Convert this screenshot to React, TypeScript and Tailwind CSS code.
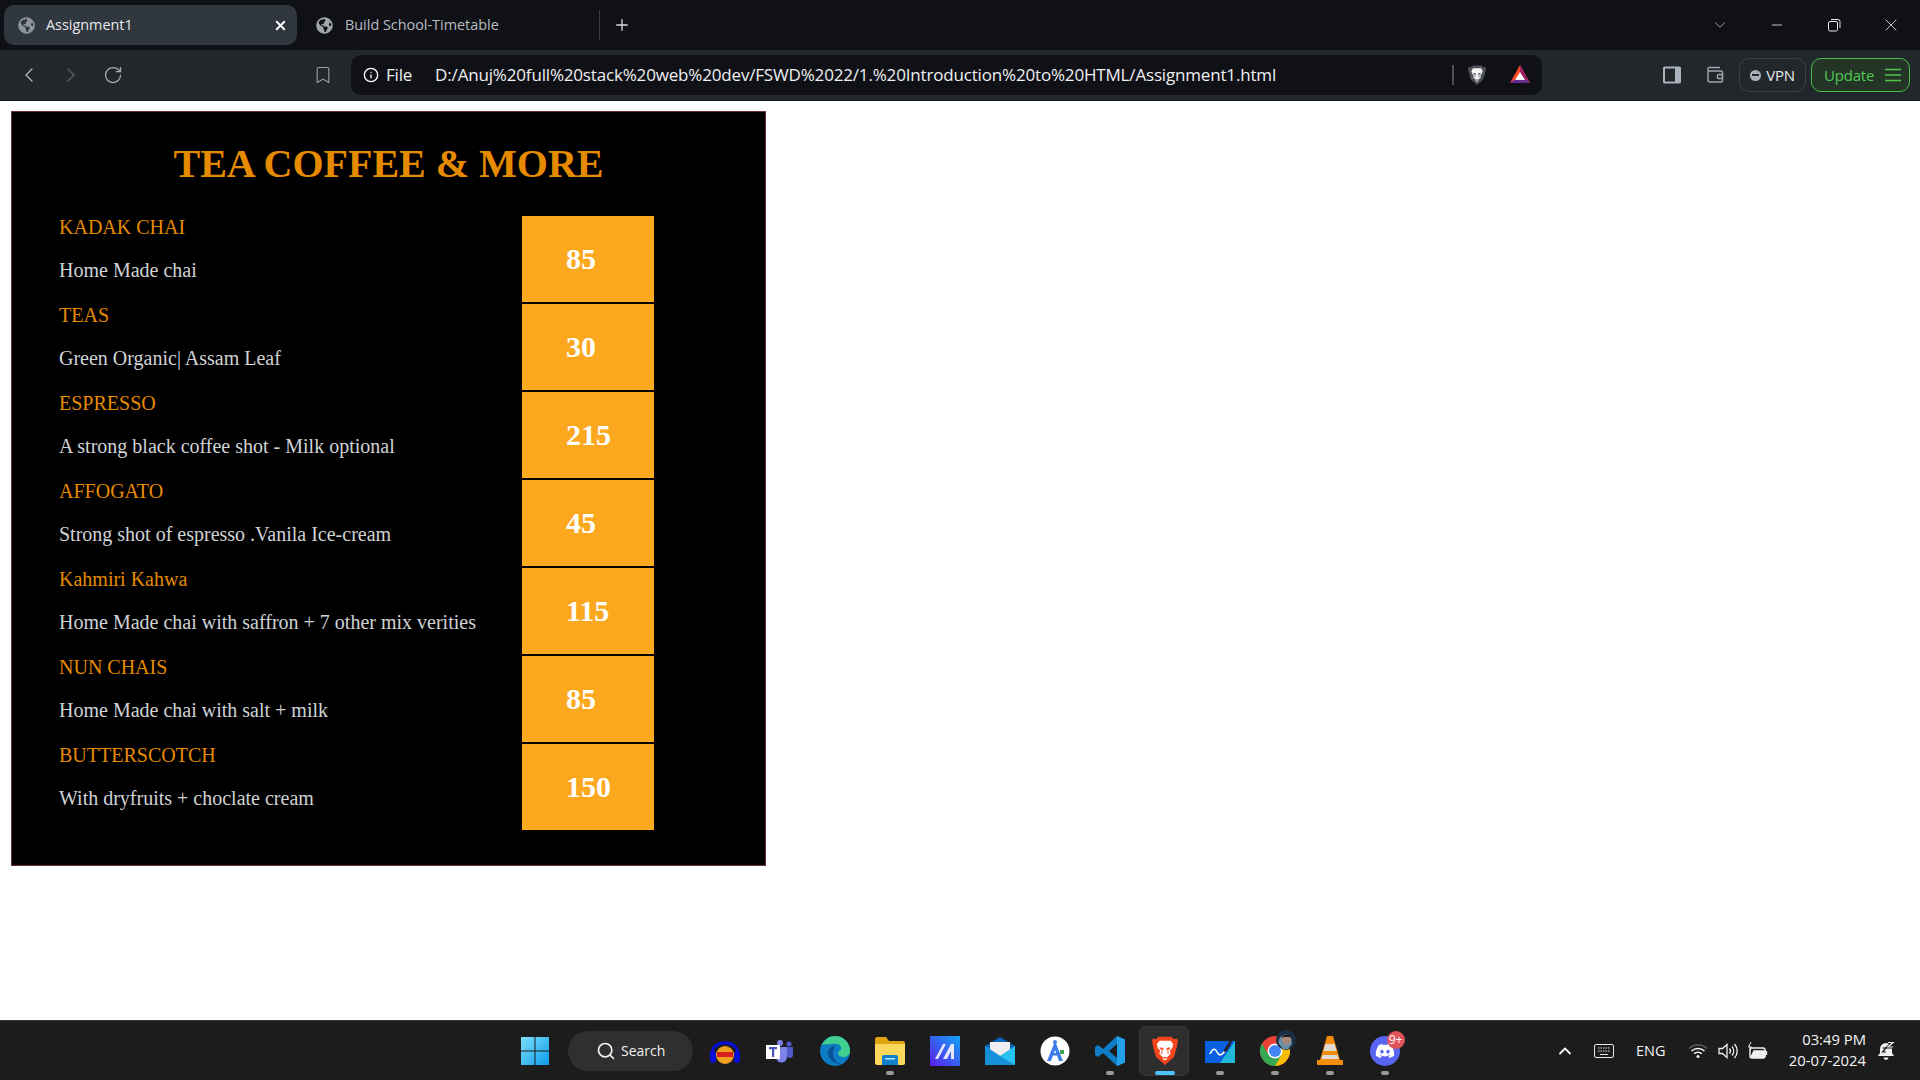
import React from "react";
import { ChevronLeft, ChevronRight, RotateCw, Bookmark, Info, Plus, X, ChevronDown, Minus, Search, ChevronUp } from "lucide-react";
import { FaGlobeAmericas, FaDiscord } from "react-icons/fa";

const items = [
  ["KADAK CHAI", "Home Made chai", "85"],
  ["TEAS", "Green Organic| Assam Leaf", "30"],
  ["ESPRESSO", "A strong black coffee shot - Milk optional", "215"],
  ["AFFOGATO", "Strong shot of espresso .Vanila Ice-cream", "45"],
  ["Kahmiri Kahwa", "Home Made chai with saffron + 7 other mix verities", "115"],
  ["NUN CHAIS", "Home Made chai with salt + milk", "85"],
  ["BUTTERSCOTCH", "With dryfruits + choclate cream", "150"],
];

const ui = "font-['Open_Sans','Noto_Sans',sans-serif]";

function Slot({ children, mark, active }: { children: React.ReactNode; mark?: boolean; active?: boolean }) {
  return (
    <div className="relative w-[55px] h-[50px] flex items-center justify-center">
      {active && <span className="absolute inset-y-0 left-[2px] w-[50px] rounded-md bg-[#2e2e2e] border border-[#363636]" />}
      <div className="relative flex">{children}</div>
      {mark && <span className="absolute bottom-[1px] left-1/2 -translate-x-1/2 w-[8px] h-[4px] rounded-full bg-[#9a9a9a]" />}
      {active && <span className="absolute bottom-[1px] left-1/2 -translate-x-1/2 w-[20px] h-[4px] rounded-full bg-[#4cc2ff]" />}
    </div>
  );
}

function Lion({ size, body, face }: { size: number; body: string; face: string }) {
  return (
    <svg width={size} height={size * 1.15} viewBox="0 0 32 37">
      <path d="M8 1h16l3 3 4-1 1 3-1 6-1 4-3 10-8 7-3 3-3-3-8-7-3-10-1-4-1-6 1-3 4 1z" fill={body} />
      <path d="M9 6h14l3 4-1 5-3 3 1 4-4 4-1 3-2 1-2-1-1-3-4-4 1-4-3-3-1-5z" fill={face} />
      <path d="M9 14l5 1 0 2-3 0zM23 14l-5 1 0 2 3 0z" fill={body} />
      <path d="M14 17l-1 6-3-1 2-5zM18 17l1 6 3-1-2-5z" fill={body} fillOpacity="0.45" />
      <path d="M13 26h6l-3 2.500z" fill={body} />
    </svg>
  );
}

export default function App() {
  return (
    <div className={`h-screen flex flex-col bg-white overflow-hidden ${ui}`}>
      {/* tab strip */}
      <div className="h-[50px] bg-[#0f1116] flex items-center pl-[4px] pr-[19px] shrink-0">
        <div className="w-[293px] h-[40px] rounded-[10px] bg-[#30373e] flex items-center pl-[14px] pr-[9px] text-[#e6e8ea] text-[14.4px]">
          <FaGlobeAmericas size={17} className="text-[#8f959c]" />
          <span className="ml-[11px] flex-1">Assignment1</span>
          <X size={15} strokeWidth={3} className="text-white" />
        </div>
        <div className="w-[302px] h-[40px] flex items-center pl-[19px] text-[#b9bdc2] text-[14.4px]">
          <FaGlobeAmericas size={17} className="text-[#a0a5ab]" />
          <span className="ml-[12px]">Build School-Timetable</span>
        </div>
        <div className="w-px h-[30px] bg-[#3a3e44]" />
        <Plus size={18} strokeWidth={1.75} className="ml-[13px] text-[#d8dade]" />
        <ChevronDown size={18} strokeWidth={1} className="ml-auto text-[#c8cace]" />
        <Minus size={16} strokeWidth={1.25} className="ml-[40px] text-[#e6e6e6]" />
        <svg width="14" height="14" viewBox="0 0 14 14" fill="none" stroke="#e6e6e6" className="ml-[42px]">
          <rect x="1.5" y="3.5" width="9" height="9.5" rx="1.5" />
          <path d="M4 1.5h7a2 2 0 0 1 2 2V10" />
        </svg>
        <X size={20} strokeWidth={1} className="ml-[40px] text-[#eeeeee]" />
      </div>
      {/* toolbar */}
      <div className="h-[51px] bg-[#22272c] border-b border-[#15181b] flex items-center shrink-0 text-[#c4c8cc]">
        <ChevronLeft size={24} strokeWidth={1.25} className="ml-[17px] text-[#b5bac0]" />
        <ChevronRight size={24} strokeWidth={1.25} className="ml-[18px] text-[#5c6268]" />
        <RotateCw size={20} strokeWidth={1.5} className="ml-[20px] text-[#a9aeb4]" />
        <Bookmark size={20} strokeWidth={1.25} className="ml-[190px] text-[#a0a5ab]" />
        <div className="ml-[18px] w-[1191px] h-[40px] rounded-[10px] bg-[#0f1116] flex items-center pl-[12px] text-[#eef0f2] text-[17px]">
          <Info size={16} strokeWidth={2} className="text-white" />
          <span className="ml-[7px] tracking-[-0.2px]">File</span>
          <span className="ml-[23px] tracking-[-0.17px]">D:/Anuj%20full%20stack%20web%20dev/FSWD%2022/1.%20Introduction%20to%20HTML/Assignment1.html</span>
          <div className="ml-auto w-[2px] h-[20px] bg-[#4b4f55]" />
          <div className="ml-[14px] flex"><Lion size={18} body="#4c4e58" face="#f4f4f4" /></div>
          <svg width="24" height="24" viewBox="0 0 24 24" className="ml-[22px] mr-[10px]">
            <path d="M12 2l10 18H2z" fill="#ff4724" />
            <path d="M12 2l10 18-5 0-5-9z" fill="#9e1f63" />
            <path d="M2 20l5-4h10l5 4z" fill="#662d91" />
            <path d="M12 9l5 8H7z" fill="#ffffff" />
          </svg>
        </div>
        <svg width="20" height="20" viewBox="0 0 20 20" className="ml-[120px]">
          <rect x="1" y="1.5" width="18" height="17" rx="1.5" fill="#aab2bd" />
          <rect x="3" y="3.5" width="10" height="13" fill="#22272c" />
        </svg>
        <svg width="20" height="20" viewBox="0 0 20 20" fill="none" stroke="#a0a6ae" strokeWidth="1.4" className="ml-[23px]">
          <path d="M3 5.5V15a2 2 0 0 0 2 2h11a1.5 1.5 0 0 0 1.5-1.5v-8A1.5 1.5 0 0 0 16 6H4.5a1.5 1.5 0 0 1 0-3.5H15" />
          <rect x="12.5" y="9.5" width="5" height="4" rx="1" />
        </svg>
        <div className="ml-[14px] w-[67px] h-[34px] rounded-[10px] border border-[#3a4046] flex items-center justify-center text-[#e8eaec] text-[15px] tracking-[-0.2px]">
          <span className="w-[11px] h-[11px] rounded-full bg-[#a9b0ba] flex items-center justify-center mr-[5px]"><span className="w-[7px] h-[2px] bg-[#22272c]" /></span>
          VPN
        </div>
        <div className="ml-[5px] w-[99px] h-[34px] rounded-[10px] border border-[#46c046] bg-[#243427] flex items-center pl-[12px] text-[#4fc94f] text-[15px] tracking-[-0.2px]">
          Update
          <svg width="18" height="14" viewBox="0 0 18 14" stroke="#4fc94f" strokeWidth="1.5" className="ml-[10px]">
            <path d="M1 1.5h16M1 7h16M1 12.5h16" />
          </svg>
        </div>
      </div>
      {/* page */}
      <div className="flex-1 pt-[10px] pl-[11px] min-h-0">
        <div className="w-[755px] h-[755px] bg-black border border-[#6b2f2f] font-['Liberation_Serif',serif] text-[20px]">
          <h1 className="h-[104px] pt-[29px] text-center text-[40px] leading-[46px] font-bold text-[#e68a00]">TEA COFFEE &amp; MORE</h1>
          <div className="flex flex-col gap-[2px] pl-[47px]">
            {items.map(([name, desc, price]) => (
              <div key={name} className="h-[86px] flex">
                <div className="w-[463px] leading-[23px]">
                  <p className="text-[#e68a00]">{name}</p>
                  <p className="mt-[20px] text-[#cfd3d6]">{desc}</p>
                </div>
                <div className="w-[132px] bg-[#fca81e] flex items-center pl-[44px] pb-[2px] text-white font-bold text-[30px]">{price}</div>
              </div>
            ))}
          </div>
        </div>
      </div>
      {/* taskbar */}
      <div className="h-[60px] bg-[#1c1c1c] border-t border-[#333333] flex items-center pl-[507px] shrink-0 text-white">
        <Slot>
          <svg width="30" height="30" viewBox="0 0 30 30">
            <defs>
              <linearGradient id="w" x1="0" y1="0" x2="1" y2="1"><stop offset="0" stopColor="#7fe0fb" /><stop offset="1" stopColor="#0a9aeb" /></linearGradient>
            </defs>
            <path d="M1 1h13.5v13.5H1zM15.5 1H29v13.5H15.5zM1 15.500h13.5V29H1zM15.5 15.500H29V29H15.5z" fill="url(#w)" />
          </svg>
        </Slot>
        <div className="ml-[6px] w-[125px] h-[40px] rounded-full bg-[#2f2f2f] flex items-center pl-[28px] text-[14px] text-[#f0f0f0]">
          <Search size={20} strokeWidth={2} />
          <span className="ml-[5px]">Search</span>
        </div>
        <div className="ml-[4px] flex items-center">
          <Slot>
            <svg width="32" height="28" viewBox="0 0 32 28">
              <path d="M3 17C3 2 29 2 29 17" fill="none" stroke="#0a10d8" strokeWidth="3" />
              <ellipse cx="16" cy="18" rx="9" ry="9" fill="#f0a020" />
              <rect x="8" y="15" width="16" height="5" fill="#d92020" />
              <rect x="1" y="14" width="6" height="12" rx="3" fill="#0a10d8" />
              <rect x="25" y="14" width="6" height="12" rx="3" fill="#0a10d8" />
            </svg>
          </Slot>
          <Slot>
            <svg width="28" height="26" viewBox="0 0 28 26">
              <circle cx="14" cy="5" r="3" fill="#7b83eb" /><circle cx="23" cy="6" r="2.5" fill="#5059c9" />
              <path d="M10 9h11v10a5 5 0 0 1-11 0z" fill="#7b83eb" />
              <path d="M21 9h6v8a3 3 0 0 1-6 0z" fill="#5059c9" />
              <rect x="0" y="7" width="14" height="14" fill="#ffffff" />
              <rect x="3" y="9" width="8" height="2.2" fill="#4b53bc" /><rect x="6" y="9" width="2.2" height="10" fill="#4b53bc" />
            </svg>
          </Slot>
          <Slot>
            <svg width="30" height="30" viewBox="0 0 30 30">
              <circle cx="15" cy="15" r="15" fill="#0c7cc4" />
              <path d="M1 11C4 3 10 0 15 0c8 0 15 6 15 15 0 4-3 6-7 6-3 0-5-2-5-4 1-3 4-2 3-6-1-3-5-4-8-3C8 9 2 7 1 11z" fill="#3fcf8e" />
              <path d="M15 10c-4 0-7 3-7 7 0 6 6 11 13 11-5-1-8-6-8-10 0-3 1-6 2-8z" fill="#0b4f94" />
            </svg>
          </Slot>
          <Slot mark>
            <svg width="30" height="28" viewBox="0 0 30 28">
              <path d="M0 2a2 2 0 0 1 2-2h9l3 4h14a2 2 0 0 1 2 2v4H0z" fill="#e0a40f" />
              <path d="M0 7h30v19a2 2 0 0 1-2 2H2a2 2 0 0 1-2-2z" fill="#fbd75b" />
              <path d="M7 20a2 2 0 0 1 2-2h12a2 2 0 0 1 2 2v8H7z" fill="#0f80cc" />
              <rect x="10" y="21" width="10" height="1.5" fill="#bfe6ff" />
            </svg>
          </Slot>
          <Slot>
            <svg width="30" height="30" viewBox="0 0 30 30">
              <defs><linearGradient id="m" x1="0" y1="1" x2="1" y2="0"><stop offset="0" stopColor="#5b1cf0" /><stop offset="1" stopColor="#13a4f2" /></linearGradient></defs>
              <rect width="30" height="30" fill="url(#m)" />
              <path d="M5 23L13 8h3L8 23zM13 23l8-15h3v15h-3v-8l-4 8z" fill="#e6e6ff" />
            </svg>
          </Slot>
          <Slot>
            <svg width="30" height="28" viewBox="0 0 30 28">
              <path d="M0 9L15 0l15 9v4H0z" fill="#0a64b8" />
              <path d="M5 5h20v9l-10 5-10-5z" fill="#eeeeee" />
              <path d="M0 9l15 10 15-10v19H0z" fill="#28c2f1" />
              <path d="M0 28V9l15 10 15 9z" fill="#1690d8" />
            </svg>
          </Slot>
          <Slot>
            <svg width="30" height="30" viewBox="0 0 30 30">
              <circle cx="15" cy="15" r="14.5" fill="#ffffff" />
              <path d="M15 5l-8 20h4l4-11 4 11h4z" fill="#3f7de8" />
              <path d="M10 17h10v2.5H10z" fill="#3f7de8" />
              <circle cx="15" cy="6" r="2" fill="#3f7de8" />
              <path d="M20 14h4v4h-4z" fill="#34a853" />
            </svg>
          </Slot>
          <Slot mark>
            <svg width="30" height="30" viewBox="0 0 30 30">
              <path d="M22 0l8 3.5v23L22 30 8 17l-5 4-3-2V11l3-2 5 4z" fill="#0f7ec6" />
              <path d="M22 0l8 3.5v23L22 30z" fill="#22a1ea" />
              <path d="M22 8v14l-8-7z" fill="#1c1c1c" />
            </svg>
          </Slot>
          <Slot active>
            <Lion size={26} body="#f4451c" face="#ffffff" />
          </Slot>
          <Slot mark>
            <svg width="30" height="30" viewBox="0 0 30 30">
              <path d="M0 5h30v22H0z" fill="#0a5fe0" />
              <path d="M15 27h15V5z" fill="#23b7d8" />
              <path d="M5 18c3-6 5-6 7-2s4 4 8-1" fill="none" stroke="#ffffff" strokeWidth="1.6" />
              <path d="M19 14l8-13 2 1-7 13-3 1z" fill="#222222" />
            </svg>
          </Slot>
          <Slot mark>
            <div className="relative">
              <svg width="30" height="30" viewBox="0 0 30 30">
                <circle cx="15" cy="15" r="15" fill="#ea4335" />
                <path d="M15 30a15 15 0 0 0 13-22.500L15 8z" fill="#fbbc05" />
                <path d="M2 7.500A15 15 0 0 0 15 30l7-12H8z" fill="#34a853" />
                <circle cx="15" cy="15" r="7.500" fill="#ffffff" />
                <circle cx="15" cy="15" r="6" fill="#4285f4" />
              </svg>
              <svg width="20" height="20" viewBox="0 0 20 20" className="absolute -top-[6px] -right-[6px]">
                <circle cx="10" cy="10" r="10" fill="#1b2f44" />
                <path d="M3 14a7 7 0 0 1 3-8l4-2 5 3 1 7-4 5H7z" fill="#6a8fa8" />
                <circle cx="10.500" cy="10" r="4.500" fill="#a8897a" />
                <path d="M6 8c0-4 8-5 9 0l-2-1H8z" fill="#1a1a22" />
              </svg>
            </div>
          </Slot>
          <Slot mark>
            <svg width="26" height="30" viewBox="0 0 26 30">
              <path d="M10 0h6l7 24h3v5H0v-5h3z" fill="#f28c0a" />
              <path d="M8.500 8h9l2 7h-13zM5.500 19h15l1 4h-17z" fill="#e0dbd3" />
            </svg>
          </Slot>
          <Slot mark>
            <div className="relative">
              <div className="w-[30px] h-[30px] rounded-full bg-[#5865f2] flex items-center justify-center">
                <FaDiscord size={20} className="text-white" />
              </div>
              <span className="absolute -top-[5px] -right-[5px] w-[18px] h-[18px] rounded-full bg-[#e0535a] flex items-center justify-center text-[12px] leading-none">9+</span>
            </div>
          </Slot>
        </div>
        {/* tray */}
        <div className="ml-auto flex items-center text-[#f2f2f2]">
          <ChevronUp size={20} strokeWidth={2.25} />
          <svg width="20" height="14" viewBox="0 0 20 14" fill="none" stroke="#e8e8e8" className="ml-[19px]">
            <rect x=".5" y=".5" width="19" height="13" rx="1.5" />
            <path d="M4 4h12M4 7h12" strokeDasharray="1.500 1" /><path d="M6 10.500h8" />
          </svg>
          <span className="ml-[22px] w-[32px] text-[14.5px]">ENG</span>
          <svg width="20" height="16" viewBox="0 0 20 16" fill="none" strokeWidth="1.600" className="ml-[20px]">
            <path d="M1 5.500a13 13 0 0 1 18 0" stroke="#555555" />
            <path d="M3.500 8a9.500 9.500 0 0 1 13 0M6.200 10.700a5.500 5.500 0 0 1 7.600 0" stroke="#f4f4f4" />
            <circle cx="10" cy="13.500" r="1.500" fill="#f4f4f4" />
          </svg>
          <svg width="20" height="18" viewBox="0 0 20 18" fill="none" stroke="#f0f0f0" strokeWidth="1.300" className="ml-[10px]">
            <path d="M1 6.500h3.500L9 2.500v13l-4.500-4H1z" />
            <path d="M11.500 6.500a4 4 0 0 1 0 5M14 4.500a7 7 0 0 1 0 9M16.500 2a10.500 10.500 0 0 1 0 14" />
          </svg>
          <svg width="21" height="18" viewBox="0 0 21 18" fill="none" stroke="#f0f0f0" strokeWidth="1.400" className="ml-[9px]">
            <path d="M3 6h13a2 2 0 0 1 2 2v6a2 2 0 0 1-2 2H5a2 2 0 0 1-2-2z" />
            <path d="M4 15l3-6h11v5a1.500 1.500 0 0 1-1.500 1.500z" fill="#f0f0f0" />
            <path d="M19.500 9v4" /><path d="M4 0L1.500 5h3L3 9" strokeWidth="1" />
          </svg>
          <div className="ml-[18px] w-[80px] pb-[2px] text-right text-[14.8px] leading-[21px] text-[#f4f4f4] whitespace-nowrap">
            <div>03:49 PM</div>
            <div>20-07-2024</div>
          </div>
          <svg width="18" height="20" viewBox="0 0 18 20" className="ml-[11px] mr-[25px]">
            <path d="M9 2a6 6 0 0 1 6 6v4l2 3H1l2-3V8a6 6 0 0 1 6-6z" fill="#f0f0f0" />
            <path d="M6.500 16.500a2.500 2.500 0 0 0 5 0z" fill="#f0f0f0" />
            <path d="M5.500 7h3.500l-3.500 4H9" fill="none" stroke="#1c1c1c" strokeWidth="1.200" />
            <path d="M11 1.500h5l-5 4.500h5" fill="none" stroke="#1c1c1c" strokeWidth="3" />
            <path d="M11 1.500h5l-5 4.500h5" fill="none" stroke="#f0f0f0" strokeWidth="1.200" />
          </svg>
        </div>
      </div>
    </div>
  );
}
